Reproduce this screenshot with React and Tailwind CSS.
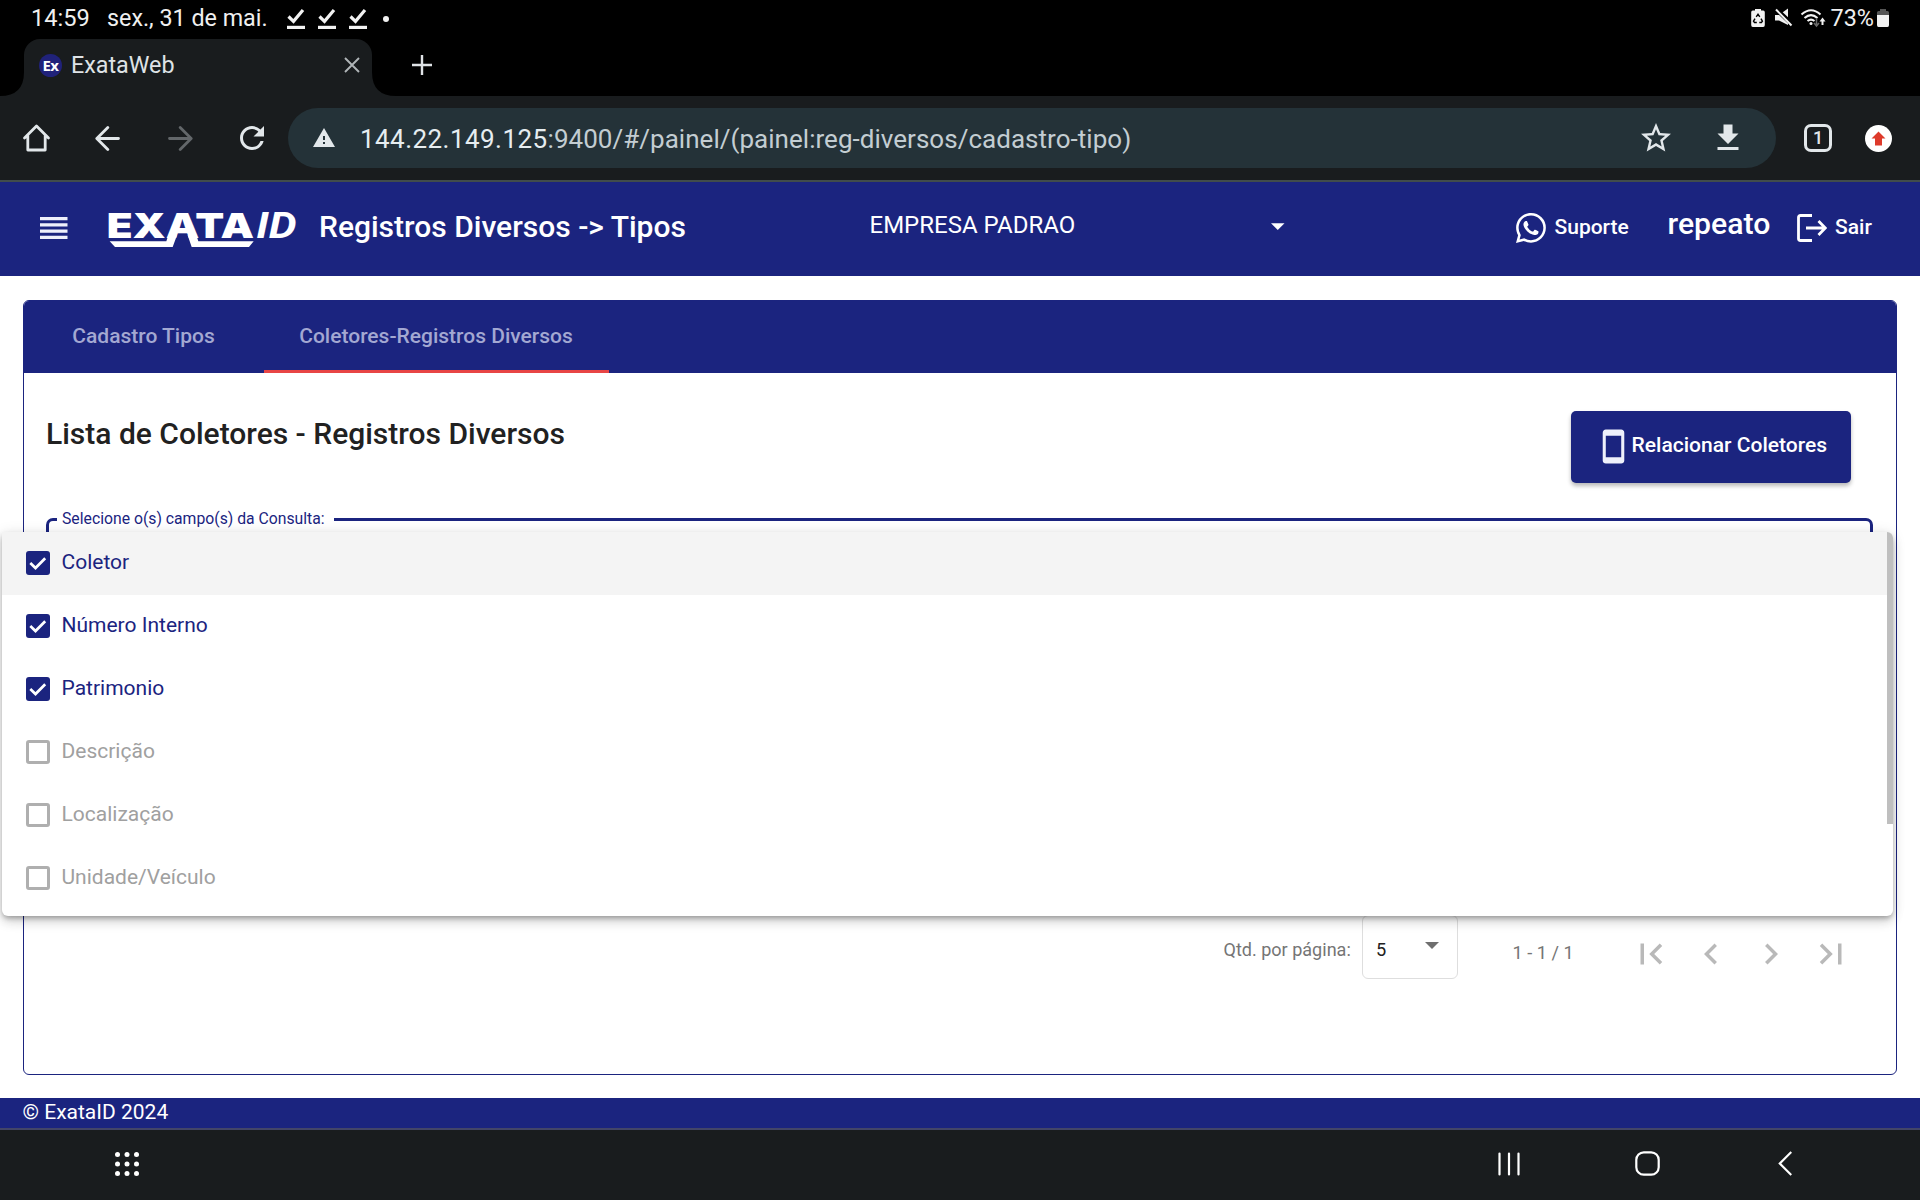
import React from "react";
import { MdRefresh, MdStarBorder, MdWarning, MdFileDownload, MdStayCurrentPortrait } from "react-icons/md";
import { BsWhatsapp } from "react-icons/bs";

function DoneIcon() {
  return (
    <svg className="h-[22px] w-[18px] shrink-0" viewBox="0 0 18 22" fill="none" stroke="#f2f2f2">
      <path d="M1.5 8.5 6.5 13.3 16 2" strokeWidth="3.2" />
      <path d="M0 19.4h18" strokeWidth="3.2" />
    </svg>
  );
}

function StatusBar() {
  return (
    <div className="flex h-[37px] shrink-0 items-center text-[#f0f0f0]">
      <span className="ml-[31px] w-[76px] text-[23.6px] leading-none whitespace-nowrap">14:59</span>
      <span className="w-[180px] text-[23.3px] leading-none whitespace-nowrap">sex., 31 de mai.</span>
      <div className="flex gap-[13px]">
        <DoneIcon />
        <DoneIcon />
        <DoneIcon />
      </div>
      <span className="ml-4 size-[6px] rounded-full bg-[#f2f2f2]" />
      <div className="ml-auto flex items-center pr-[31px]">
        <svg className="mb-px h-5 w-[14px]" viewBox="0 0 14 20">
          <path d="M4 1h6v1.6h2.2q1.6 0 1.6 1.6V17q0 2-1.6 2H1.8Q.2 19 .2 17V4.200q0-1.600 1.600-1.600H4z" fill="#f2f2f2" />
          <path d="M5.200 8.800 7 6.300l1.800 2.500M10 10.600l1.400 2.600-1 1.300H8.300M5.800 14.500H3.500l-1-1.300L4 10.600" fill="none" stroke="#000" strokeWidth="1.400" />
        </svg>
        <svg className="mb-px ml-[9px] h-5 w-[19px]" viewBox="0 0 19 20">
          <path d="M1 7h4L14 .5V17L5 12.500H1z" fill="#f2f2f2" />
          <path d="M1 0 19 17" stroke="#000" strokeWidth="4.500" />
          <path d="M2 1.500 17.500 17.500" stroke="#f2f2f2" strokeWidth="2" />
        </svg>
        <svg className="mb-px ml-[7px] h-5 w-[26px]" viewBox="0 0 26 20" fill="none" stroke="#f2f2f2">
          <path d="M1.500 6.500Q11 -2 20.500 6.500" strokeWidth="2" />
          <path d="M4.500 10Q11 4.300 17.500 10" strokeWidth="2" />
          <path d="M7.500 13Q11 10.200 14.500 13" strokeWidth="2" />
          <circle cx="11" cy="15.500" r="1.500" fill="#f2f2f2" stroke="none" />
          <path d="M16.500 10v7.500M14 15l2.500 3 2.500-3" stroke="#6a6a6a" strokeWidth="1.500" />
          <path d="M22.500 17v-5" strokeWidth="2" />
          <path d="M19.500 13.500 22.500 9.500l3 4z" fill="#f2f2f2" stroke="none" />
        </svg>
        <span className="ml-[5px] text-[23.4px] leading-none">73%</span>
        <svg className="ml-[3px] mb-px h-[18px] w-3" viewBox="0 0 12 18">
          <path d="M3 0h6v2h1.500Q12 2 12 3.500V6H0V3.500Q0 2 1.500 2H3z" fill="#555" />
          <path d="M0 6h12v10q0 2-1.500 2h-9Q0 18 0 16z" fill="#f2f2f2" />
        </svg>
      </div>
    </div>
  );
}

function TabStrip() {
  return (
    <div className="mt-[2px] flex h-[57px] shrink-0">
      <svg className="h-[57px] w-6" viewBox="0 0 24 57">
        <path d="M24 33Q24 57 0 57H24z" fill="#191c1e" />
      </svg>
      <div className="flex w-[348px] items-center rounded-t-[16px] bg-[#191c1e] pb-[5px]">
        <span className="ml-[15px] flex size-[23px] items-center justify-center rounded-full bg-[#20227a] font-['Open_Sans'] text-[15px] font-bold tracking-[-0.5px] text-white">Ex</span>
        <span className="ml-[9px] pt-[2px] text-[23.3px] leading-none text-[#dfe3e6]">ExataWeb</span>
        <svg className="mr-[12px] ml-auto size-4" viewBox="0 0 16 16" stroke="#b0b5b8" strokeWidth="1.900">
          <path d="M1 1 15 15M15 1 1 15" />
        </svg>
      </div>
      <svg className="h-[57px] w-6" viewBox="0 0 24 57">
        <path d="M0 33Q0 57 24 57H0z" fill="#191c1e" />
      </svg>
      <svg className="mt-[15.500px] ml-[15.500px] size-5" viewBox="0 0 20 20" stroke="#dfe3e6" strokeWidth="2.400">
        <path d="M0 10h20M10 0v20" />
      </svg>
    </div>
  );
}

function Toolbar() {
  return (
    <div className="flex h-[84px] shrink-0 items-center bg-[#191c1e] text-[#e2e7ea]">
      <svg className="ml-[22px] h-7 w-[29px]" viewBox="0 0 29 28" fill="none" stroke="currentColor" strokeWidth="2.800" strokeLinejoin="round" strokeLinecap="round">
        <path d="M2.500 14 14.500 2 26.500 14M5.800 11V26H23.200V11" />
      </svg>
      <svg className="ml-[44px] size-[25px]" viewBox="0 0 25 25" fill="none" stroke="currentColor" strokeWidth="2.800" strokeLinecap="round" strokeLinejoin="round">
        <path d="M23.500 12.500H2M12.800 1.500 1.800 12.500l11 11" />
      </svg>
      <svg className="ml-[47.500px] size-[25px]" viewBox="0 0 25 25" fill="none" stroke="#63676a" strokeWidth="2.800" strokeLinecap="round" strokeLinejoin="round">
        <path d="M1.500 12.500H23M12.200 1.500l11 11-11 11" />
      </svg>
      <MdRefresh className="ml-[41.500px] size-9 shrink-0" />
      <div className="ml-[18px] flex h-[60px] w-[1488px] items-center rounded-full bg-[#243238]">
        <MdWarning className="ml-6 size-6 shrink-0" />
        <span className="ml-6 pt-[2px] text-[26px] leading-none whitespace-nowrap tracking-[0.45px] text-[#e6edf0]">144.22.149.125</span>
        <span className="pt-[2px] text-[26px] leading-none whitespace-nowrap tracking-[0.03px] text-[#c3cdd2]">:9400/#/painel/(painel:reg-diversos/cadastro-tipo)</span>
        <MdStarBorder className="ml-auto size-9 shrink-0" />
        <MdFileDownload className="mr-[30px] ml-[36px] size-9 shrink-0" />
      </div>
      <div className="ml-7 flex size-7 shrink-0 items-center justify-center rounded-[7px] border-[3px] border-current text-[18px] leading-none font-medium">1</div>
      <svg className="ml-[33px] size-[27px]" viewBox="0 0 27 27">
        <circle cx="13.500" cy="13.500" r="13.500" fill="#fff" />
        <path d="M13.500 6.500 20.500 13.500H17V20.500H10V13.500H6.500z" fill="#de3a2b" />
      </svg>
    </div>
  );
}

function ExataLogo() {
  return (
    <svg className="mt-[6px] ml-[39.500px] h-[60px] w-[191px] shrink-0" viewBox="52 14 573 180" fill="#fff">
      <text x="51" y="128" fontFamily="Inter" fontWeight="900" fontSize="104" textLength="442" lengthAdjust="spacingAndGlyphs">EXATA</text>
      <text x="500" y="127" fontFamily="Roboto" fontWeight="700" fontStyle="italic" fontSize="113" textLength="121" lengthAdjust="spacingAndGlyphs">ID</text>
      <path d="M60 138H230L236 120H262L249 155H76z" />
      <path d="M294 120H320L326 138H492L478 155H306z" />
    </svg>
  );
}

function AppHeader() {
  return (
    <header className="flex h-[94px] shrink-0 items-center bg-[#1b247f] pb-[5px] text-white">
      <svg className="mt-[2px] ml-10 h-[22px] w-[27.500px]" viewBox="0 0 27.500 22" fill="#eef0fb">
        <path d="M0 0h27.500v3.200H0zM0 6.300h27.500v3.200H0zM0 12.500h27.500v3.200H0zM0 18.800h27.500V22H0z" />
      </svg>
      <ExataLogo />
      <h1 className="ml-[21px] w-[550.500px] pt-px text-[30px] leading-none font-medium whitespace-nowrap">Registros Diversos -&gt; Tipos</h1>
      <span className="w-[401.500px] pb-[3px] text-[24px] leading-none">EMPRESA PADRAO</span>
      <svg className="h-[7px] w-[13.500px]" viewBox="0 0 14 7" fill="#fff">
        <path d="M0 0h14L7 7z" />
      </svg>
      <BsWhatsapp className="mt-[3px] ml-[231.500px] size-[30px] shrink-0" />
      <span className="ml-[8.500px] w-[113px] pt-px text-[21px] leading-none font-medium">Suporte</span>
      <span className="w-[129px] pb-[4px] text-[30.2px] leading-none font-medium">repeato</span>
      <svg className="mt-[3px] h-7 w-[30px]" viewBox="0 0 30 28" fill="none" stroke="#fff" strokeWidth="2.800">
        <path d="M15 1.500H3.500Q1.500 1.500 1.500 3.500V24.500Q1.500 26.500 3.500 26.500H15" />
        <path d="M9 14H28M21.500 7 28.300 14 21.500 21" />
      </svg>
      <span className="ml-[8.500px] pt-px text-[21px] leading-none font-medium">Sair</span>
    </header>
  );
}

const OPTIONS = [
  ["Coletor", true],
  ["Número Interno", true],
  ["Patrimonio", true],
  ["Descrição", false],
  ["Localização", false],
  ["Unidade/Veículo", false],
];

function OptionsPanel() {
  return (
    <div className="absolute top-[350px] left-[2px] z-10 h-[384px] w-[1891px] rounded-b-[6px] rounded-tr-[6px] bg-white shadow-[0_3px_5px_-1px_rgba(0,0,0,0.28),0_6px_12px_0_rgba(0,0,0,0.14),0_1px_14px_0_rgba(0,0,0,0.10)]">
      {OPTIONS.map(([label, on], i) => (
        <div key={label} className={"flex h-[63px] items-start pl-6 " + (i === 0 ? "bg-[#f4f4f4] rounded-tr-[6px]" : "")}>
          {on ? (
            <span className="mt-[19px] size-6 rounded-[3px] bg-[#1b247f]">
              <svg className="size-6" viewBox="0 0 24 24" fill="none" stroke="#fff" strokeWidth="2.700">
                <path d="M4.300 12 9.500 17 19.200 7.300" />
              </svg>
            </span>
          ) : (
            <span className="mt-[19px] size-6 rounded-[3px] border-[3px] border-[#afafaf]" />
          )}
          <span className={"ml-[11.500px] pt-px text-[21px] leading-[59px] " + (on ? "text-[#1b247f]" : "text-[#a0a0a0]")}>{label}</span>
        </div>
      ))}
      <div className="absolute top-0 right-0 h-[292px] w-[6px] rounded-tr-[6px] bg-[#bfbfbf]" />
    </div>
  );
}

const PAGE_ICONS = [
  "M18.410 16.590L13.820 12l4.590-4.590L17 6l-6 6 6 6zM6 6h2v12H6z",
  "M15.410 7.410L14 6l-6 6 6 6 1.410-1.410L10.830 12z",
  "M10 6L8.590 7.410 13.170 12l-4.580 4.590L10 18l6-6z",
  "M5.590 7.410L10.180 12l-4.590 4.590L7 18l6-6-6-6zM16 6h2v12h-2z",
];

function Paginator() {
  return (
    <div className="flex h-[64px] items-start justify-end pr-[44px] text-[#757575]">
      <span className="w-[138px] text-[18.050px] leading-[70px] whitespace-nowrap">Qtd. por página:</span>
      <div className="flex h-[64px] w-[96px] items-start rounded-[6px] border border-[#dedede] pl-[13.500px]">
        <span className="text-[18.200px] leading-[68px] text-[#212121]">5</span>
        <svg className="mt-[26px] mr-[18px] ml-auto h-[7px] w-[14px]" viewBox="0 0 14 7" fill="#6f6f6f">
          <path d="M0 0h14L7 7z" />
        </svg>
      </div>
      <span className="ml-[55px] w-[117.500px] text-[18.200px] leading-[76px] whitespace-nowrap">1 - 1 / 1</span>
      <div className="mt-[18px] flex gap-[18px]">
        {PAGE_ICONS.map((d) => (
          <svg key={d} className="size-[42px]" viewBox="0 0 24 24" fill="#b9b9b9">
            <path d={d} />
          </svg>
        ))}
      </div>
    </div>
  );
}

function Card() {
  return (
    <section className="flex h-[775px] flex-col overflow-hidden rounded-[6px] border border-[#1b247f] bg-white">
      <div className="flex h-[72px] shrink-0 bg-[#1b247f] text-[21px] font-medium text-[#a3a8d2]">
        <div className="flex w-[240px] items-center justify-center pr-px">Cadastro Tipos</div>
        <div className="flex w-[345px] items-center justify-center border-b-[3px] border-[#e84545] pt-[3px] pr-px">Coletores-Registros Diversos</div>
      </div>
      <div className="flex shrink-0 items-start justify-between pt-[38px] pr-[45px] pl-[22px]">
        <h2 className="pt-[8px] text-[30px] leading-none font-medium text-[#212121]">Lista de Coletores - Registros Diversos</h2>
        <button className="flex h-[72px] w-[280px] items-center rounded-[5px] bg-[#1b247f] text-white shadow-[0_3px_4px_rgba(0,0,0,0.28)]">
          <MdStayCurrentPortrait className="mb-px ml-[24px] size-[37px] shrink-0 text-[#eef0fb]" />
          <span className="-ml-[0.500px] pb-[5px] text-[21.050px] leading-none font-medium whitespace-nowrap">Relacionar Coletores</span>
        </button>
      </div>
      <fieldset className="mr-[23px] ml-[22px] mt-[26px] h-[74px] shrink-0 rounded-[7px] border-[3px] border-[#1b247f] pl-[8px]">
        <legend className="w-[277px] pl-[5px] text-[15.750px] leading-5 whitespace-nowrap text-[#1b247f]">Selecione o(s) campo(s) da Consulta:</legend>
      </fieldset>
      <div className="mt-auto mb-[95px]">
        <Paginator />
      </div>
    </section>
  );
}

export default function App() {
  return (
    <div className="flex h-[1200px] w-[1920px] flex-col overflow-hidden bg-black font-['Roboto',sans-serif]">
      <StatusBar />
      <TabStrip />
      <Toolbar />
      <div className="h-[2px] shrink-0 bg-[#414c4b]" />
      <div className="relative flex h-[946px] shrink-0 flex-col bg-white">
        <AppHeader />
        <main className="flex-1 px-[23px] pt-6">
          <Card />
        </main>
        <OptionsPanel />
        <footer className="flex h-[30px] shrink-0 items-center bg-[#1b247f] pb-px pl-[22.500px] text-[21px] leading-none text-white">© ExataID 2024</footer>
      </div>
      <div className="h-[2px] shrink-0 bg-[#434568]" />
      <nav className="flex h-[70px] shrink-0 items-center bg-[#191c1e] pb-[3px]">
        <svg className="ml-[115px] size-6" viewBox="0 0 24 24" fill="#fff">
          {[2.5, 12, 21.5].map((y) => [2.5, 12, 21.5].map((x) => <circle key={x + "-" + y} cx={x} cy={y} r="2.500" />))}
        </svg>
        <div className="ml-auto flex items-center pr-[128px]">
          <svg className="h-6 w-[22px]" viewBox="0 0 22 24" stroke="#fff" strokeWidth="2.200" strokeLinecap="round">
            <path d="M1.500 1.500v21M11 1.500v21M20.500 1.500v21" />
          </svg>
          <svg className="ml-[115px] size-[25px]" viewBox="0 0 25 25" fill="none" stroke="#fff" strokeWidth="2.200">
            <rect x="1.300" y="1.300" width="22.400" height="22.400" rx="7.500" />
          </svg>
          <svg className="ml-[118px] h-[25px] w-[14px]" viewBox="0 0 14 25" fill="none" stroke="#fff" strokeWidth="2.200">
            <path d="M13.300 1 1.800 12.500 13.300 24" />
          </svg>
        </div>
      </nav>
    </div>
  );
}
